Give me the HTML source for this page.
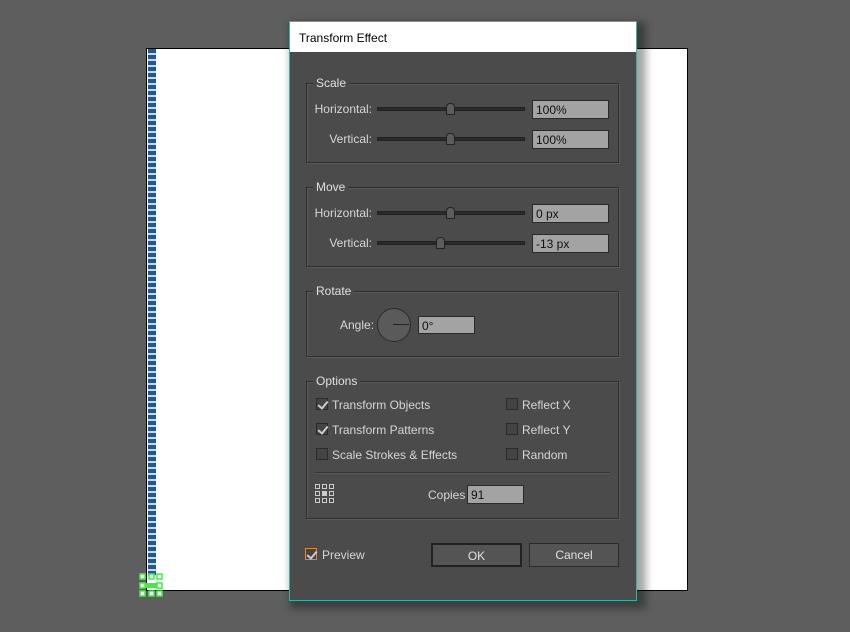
<!DOCTYPE html>
<html><head><style>
*{margin:0;padding:0;box-sizing:border-box}
body{width:850px;height:632px;background:#5e5e5e;position:relative;overflow:hidden;font-family:"Liberation Sans",sans-serif;font-size:12px;color:#d6d6d6}
.a{position:absolute}
.grp{position:absolute;border:1px solid #2e2e2e;box-shadow:inset 1px 1px 0 #5a5a5a,1px 1px 0 #5a5a5a}
.lg{position:absolute;top:-8px;left:6px;background:#4b4b4b;padding:0 3px;color:#e0e0e0}
.lab{position:absolute;text-align:right;width:70px}
.trk{position:absolute;height:4px;background:#2a2a2a;border:1px solid #222;width:148px}
.th{position:absolute;width:9px;height:12px;background:#5c5c5c;border:1px solid #222;border-radius:4px 4px 1px 1px}
.inp{position:absolute;width:77px;height:19px;background:#a3a3a3;border:1px solid #2a2a2a;color:#111;padding:2px 3px;font-size:12px}
.cb{position:absolute;width:12px;height:12px;border:1px solid #2a2a2a;background:#444}
.ck::after{content:"";position:absolute;left:3px;top:0px;width:4px;height:8px;border:solid #ccc;border-width:0 2px 2px 0;transform:rotate(40deg)}
.btn{position:absolute;height:24px;background:#545454;border:1px solid #2a2a2a;text-align:center;line-height:22px;color:#e0e0e0}
</style></head><body>
<div class="a" style="left:146px;top:48px;width:542px;height:543px;background:#fff;border:1px solid #000"></div>
<div class="a" style="left:148px;top:49px;width:8px;height:527px;background:repeating-linear-gradient(#1d5a94 0 4px,#c7d8ea 4px 6px)"></div>
<svg class="a" style="left:139px;top:573px" width="25" height="25"><g fill="#fff" stroke="#3ef03e" stroke-width="1.5"><rect x="1" y="1" width="5" height="5"/><rect x="10" y="1" width="5" height="5"/><rect x="18" y="1" width="5" height="5"/><rect x="1" y="10" width="5" height="5"/><rect x="18" y="10" width="5" height="5"/><rect x="1" y="18" width="5" height="5"/><rect x="10" y="18" width="5" height="5"/><rect x="18" y="18" width="5" height="5"/></g><rect x="6" y="10" width="12" height="5" fill="#3ef03e"/></svg>
<div class="a" style="left:290px;top:22px;width:356px;height:587px;background:rgba(0,0,0,.35);filter:blur(4px)"></div>
<div class="a" style="left:289px;top:21px;width:348px;height:580px;background:#4b4b4b;border:1px solid #2fb5a0"></div>
<div class="a" style="left:290px;top:22px;width:346px;height:30px;background:#fff;color:#000;padding:9px 0 0 9px;font-size:12px">Transform Effect</div>

<div class="grp" style="left:306px;top:83px;width:313px;height:80px"><span class="lg">Scale</span></div>
<div class="lab" style="left:302px;top:102px">Horizontal:</div><div class="trk" style="left:377px;top:107px"></div><div class="th" style="left:446px;top:103px"></div><div class="inp" style="left:532px;top:100px">100%</div>
<div class="lab" style="left:302px;top:132px">Vertical:</div><div class="trk" style="left:377px;top:137px"></div><div class="th" style="left:446px;top:133px"></div><div class="inp" style="left:532px;top:130px">100%</div>

<div class="grp" style="left:306px;top:187px;width:313px;height:80px"><span class="lg">Move</span></div>
<div class="lab" style="left:302px;top:206px">Horizontal:</div><div class="trk" style="left:377px;top:211px"></div><div class="th" style="left:446px;top:207px"></div><div class="inp" style="left:532px;top:204px">0 px</div>
<div class="lab" style="left:302px;top:236px">Vertical:</div><div class="trk" style="left:377px;top:241px"></div><div class="th" style="left:436px;top:237px"></div><div class="inp" style="left:532px;top:234px">-13 px</div>

<div class="grp" style="left:306px;top:291px;width:313px;height:66px"><span class="lg">Rotate</span></div>
<div class="a" style="left:340px;top:318px">Angle:</div>
<div class="a" style="left:377px;top:308px;width:34px;height:34px;border-radius:50%;background:#5a5a5a;border:1px solid #2a2a2a"></div>
<div class="a" style="left:393px;top:324px;width:16px;height:1px;background:#222"></div>
<div class="inp" style="left:418px;top:316px;width:57px;height:18px">0°</div>

<div class="grp" style="left:306px;top:381px;width:313px;height:138px"><span class="lg">Options</span></div>
<div class="cb ck" style="left:316px;top:398px"></div><div class="a" style="left:332px;top:398px">Transform Objects</div>
<div class="cb ck" style="left:316px;top:423px"></div><div class="a" style="left:332px;top:423px">Transform Patterns</div>
<div class="cb" style="left:316px;top:448px"></div><div class="a" style="left:332px;top:448px">Scale Strokes &amp; Effects</div>
<div class="cb" style="left:506px;top:398px"></div><div class="a" style="left:522px;top:398px">Reflect X</div>
<div class="cb" style="left:506px;top:423px"></div><div class="a" style="left:522px;top:423px">Reflect Y</div>
<div class="cb" style="left:506px;top:448px"></div><div class="a" style="left:522px;top:448px">Random</div>
<div class="a" style="left:315px;top:472px;width:295px;height:1px;background:#333;box-shadow:0 1px 0 #5a5a5a"></div>
<svg class="a" style="left:315px;top:484px" width="20" height="20"><g fill="none" stroke="#ccc" stroke-width="1"><rect x=".5" y=".5" width="4" height="4"/><rect x="7.5" y=".5" width="4" height="4"/><rect x="14.5" y=".5" width="4" height="4"/><rect x=".5" y="7.5" width="4" height="4"/><rect x="14.5" y="7.5" width="4" height="4"/><rect x=".5" y="14.5" width="4" height="4"/><rect x="7.5" y="14.5" width="4" height="4"/><rect x="14.5" y="14.5" width="4" height="4"/></g><rect x="7" y="7" width="5" height="5" fill="#ccc"/></svg>
<div class="a" style="left:428px;top:488px">Copies</div>
<div class="inp" style="left:467px;top:485px;width:57px;height:19px">91</div>

<div class="cb ck" style="left:305px;top:548px;border-color:#e08a2a"></div><div class="a" style="left:322px;top:548px">Preview</div>
<div class="btn" style="left:431px;top:543px;width:91px;border:2px solid #222">OK</div>
<div class="btn" style="left:529px;top:543px;width:90px">Cancel</div>
</body></html>
